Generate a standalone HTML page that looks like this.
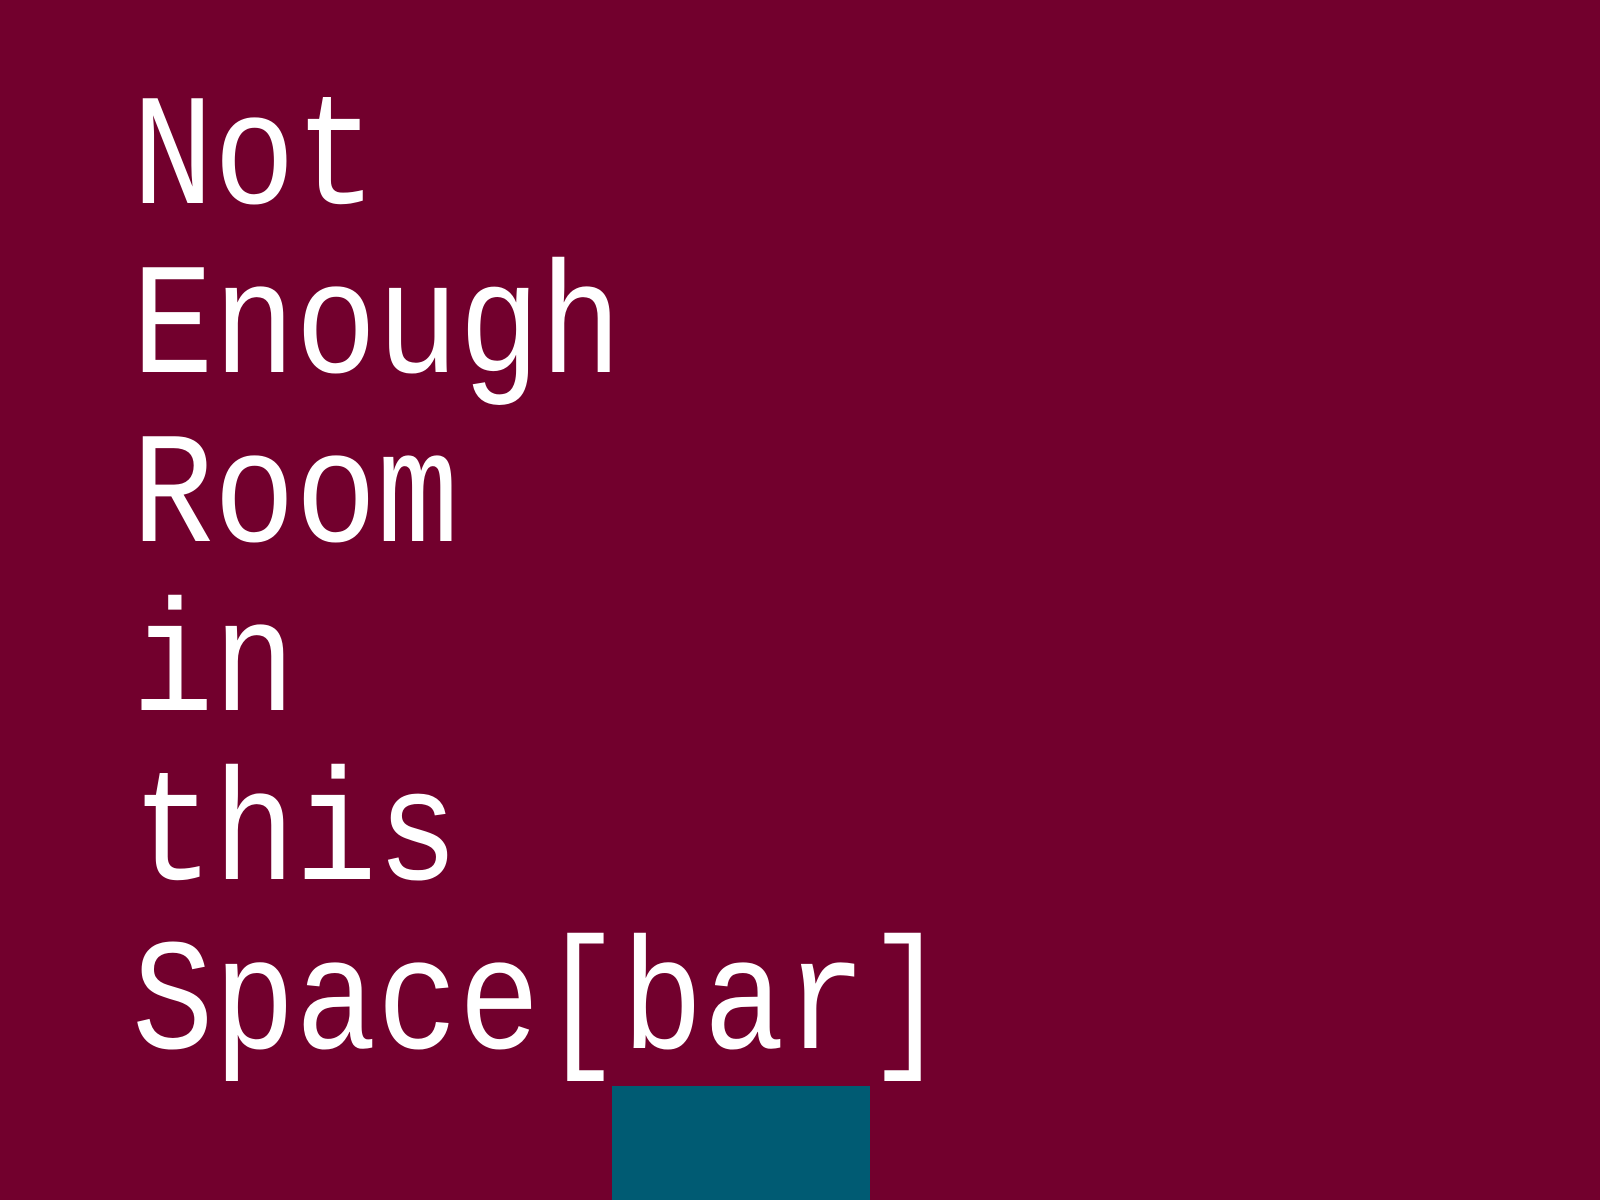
<!DOCTYPE html>
<html><head><style>
html,body{margin:0;padding:0;background:#72002d;width:1600px;height:1200px;overflow:hidden}
</style></head><body>
<svg width="1600" height="1200" viewBox="0 0 1600 1200" xmlns="http://www.w3.org/2000/svg" style="position:absolute;left:0;top:0">
<rect width="1600" height="1200" fill="#72002d"/>
<rect x="612" y="1086" width="258" height="114" fill="#005b73"/>
<g fill="#fff" font-family="Liberation Mono, monospace" font-size="136">
<text transform="translate(132,203) scale(1,1.17)">Not</text>
<text transform="translate(132,372) scale(1,1.17)">Enough</text>
<text transform="translate(132,541) scale(1,1.17)">Room</text>
<text transform="translate(132,710) scale(1,1.17)">in</text>
<text transform="translate(132,879) scale(1,1.17)">this</text>
<text transform="translate(132,1048) scale(1,1.17)">Space[bar]</text>
</g>
</svg>
</body></html>
